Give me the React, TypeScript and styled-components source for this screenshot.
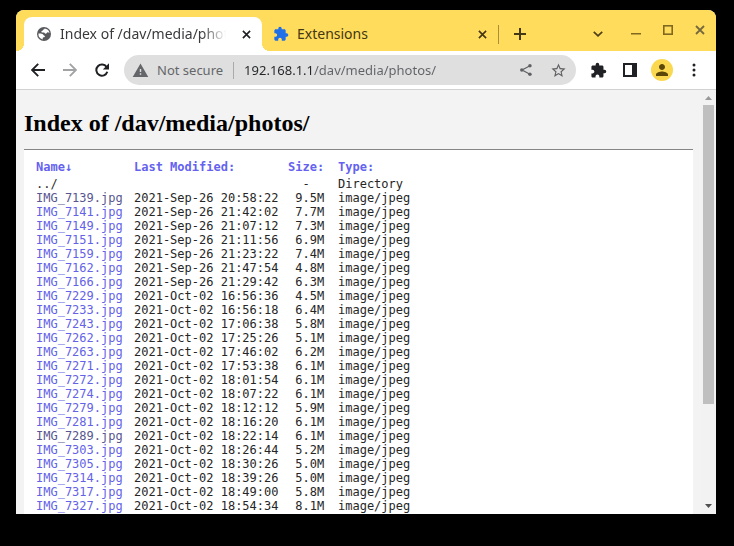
import React from "react";
import styled, { createGlobalStyle } from "styled-components";
import { MdExtension, MdPerson, MdStarBorder, MdWarning } from "react-icons/md";

const GlobalStyle = createGlobalStyle`
  * { box-sizing: border-box; }
  body { margin: 0; background: #000; }
  button, input { font: inherit; }
`;

const Desktop = styled.div`
  height: 100vh;
  padding: 10px 18px 32px 16px;
  background: #000;
  font-family: "Noto Sans", "Open Sans", sans-serif;
  font-size: 14px;
`;

const BrowserWindow = styled.div`
  display: flex;
  flex-direction: column;
  height: 100%;
  overflow: hidden;
  border-radius: 8px 8px 0 0;
  background: #f3f3f3;
`;

const TabStrip = styled.header`
  display: flex;
  flex: none;
  height: 41px;
  padding: 7px 0 0 8px;
  background: #ffdc5c;
`;

const Tab = styled.div<{ $active?: boolean }>`
  position: relative;
  display: flex;
  flex: 0 1 ${(p) => (p.$active ? 238 : 236)}px;
  min-width: 0;
  align-items: center;
  gap: 8px;
  padding: 0 8px 0 ${(p) => (p.$active ? 12 : 11)}px;
  border-radius: 8px 8px 0 0;
  color: ${(p) => (p.$active ? "#3a3a3d" : "#443714")};
  background: ${(p) => (p.$active ? "#fff" : "transparent")};

  &::before,
  &::after {
    content: "";
    display: ${(p) => (p.$active ? "block" : "none")};
    position: absolute;
    bottom: 0;
    width: 8px;
    height: 8px;
  }
  &::before {
    right: 100%;
    background: radial-gradient(circle at 0 0, transparent 8px, #fff 8px);
  }
  &::after {
    left: 100%;
    background: radial-gradient(circle at 100% 0, transparent 8px, #fff 8px);
  }
`;

const TabIcon = styled.span<{ $color: string }>`
  display: flex;
  flex: none;
  width: 16px;
  justify-content: center;
  font-size: 16px;
  color: ${(p) => p.$color};
`;

const TabTitle = styled.span<{ $fade?: boolean }>`
  flex: 1;
  min-width: 0;
  overflow: hidden;
  white-space: nowrap;
  line-height: 20px;
  mask-image: ${(p) =>
    p.$fade ? "linear-gradient(270deg, transparent 4px, #000 28px)" : "none"};
`;

const IconButton = styled.button<{ $size?: number; $width?: number; $tint?: string }>`
  display: flex;
  flex: none;
  align-items: center;
  justify-content: center;
  width: ${(p) => p.$width ?? 32}px;
  height: 28px;
  padding: 0;
  border: 0;
  background: none;
  color: ${(p) => p.$tint ?? "#202124"};
  font-size: ${(p) => p.$size ?? 17}px;
`;

const TabDivider = styled.span`
  flex: none;
  align-self: center;
  width: 1px;
  height: 19px;
  background: #a88f3c;
`;

const StripButtons = styled.div`
  display: flex;
  flex: 1;
  align-items: center;
  justify-content: space-between;
  padding-left: 5px;
`;

const WindowButtons = styled.div`
  display: flex;
  align-items: center;
`;

const FrameButton = styled(IconButton)`
  height: 34px;
  padding-bottom: 8px;
`;

const Toolbar = styled.nav`
  display: flex;
  flex: none;
  align-items: center;
  height: 39px;
  padding: 0 6px;
  border-bottom: 1px solid #d2d2d2;
  background: #fff;
`;

const Omnibox = styled.div`
  display: flex;
  flex: 1;
  min-width: 0;
  align-items: center;
  height: 30px;
  margin: 0 6px;
  padding: 0 2px 0 8px;
  border-radius: 15px;
  background: #dfdfdf;
`;

const Security = styled.button`
  display: flex;
  flex: none;
  align-items: center;
  gap: 8px;
  padding: 0 10px 0 0;
  border: 0;
  border-right: 1px solid #aaa;
  background: none;
  color: #646669;
  font-size: 13px;
  line-height: 16px;

  svg {
    font-size: 17px;
  }
`;

const Address = styled.input`
  flex: 1;
  min-width: 0;
  height: 24px;
  padding: 0 0 0 10px;
  border: 0;
  outline: 0;
  color: #5f6165;
  background: linear-gradient(90deg, #242528 80px, #5f6165 80px);
  background-clip: text;
  -webkit-background-clip: text;
  -webkit-text-fill-color: transparent;
  font-size: 13px;
`;

const Avatar = styled.span`
  display: flex;
  align-items: center;
  justify-content: center;
  width: 22px;
  height: 22px;
  border-radius: 50%;
  background: #fad84f;
  color: #5b4708;
  font-size: 18px;
`;

const Viewport = styled.div`
  display: flex;
  flex: 1;
  min-height: 0;
`;

const Page = styled.main`
  flex: 1;
  min-width: 0;
  overflow: hidden;
  padding: 0 8px;
`;

const Heading = styled.h1`
  margin: 0;
  padding: 19px 0 12px;
  color: #000;
  font: bold 24px/28px "Liberation Serif", serif;
`;

const Listing = styled.section`
  min-height: 100%;
  padding: 10px 12px;
  border-top: 1px solid #858585;
  background: #fff;
`;

const FileTable = styled.table`
  table-layout: fixed;
  width: 448px;
  border-collapse: collapse;
  color: #262626;
  font: 12px/14px "DejaVu Sans Mono", monospace;
  white-space: pre;
`;

const HeadCell = styled.th<{ $width?: number }>`
  width: ${(p) => (p.$width ? `${p.$width}px` : "auto")};
  padding: 0 0 3px;
  color: #6462ef;
  text-align: left;
`;

const Cell = styled.td`
  padding: 0;
`;

const FileLink = styled.a<{ $tone?: "visited" | "parent" }>`
  color: ${(p) =>
    p.$tone === "visited" ? "#59558f" : p.$tone === "parent" ? "#303030" : "#6462e8"};
  text-decoration: none;
`;

const Scrollbar = styled.div`
  display: flex;
  flex: none;
  flex-direction: column;
  align-items: center;
  width: 15px;
  background: #f2f2f3;
`;

const Arrow = styled.svg`
  flex: none;
  width: 15px;
  height: 15px;
`;

const Track = styled.div`
  flex: 1;
  width: 11px;
`;

const Thumb = styled.div`
  height: 76%;
  background: #bfbfbf;
`;

const files: [string, string, string][] = [
  ["7139", "Sep-26 20:58:22", "9.5M"],
  ["7141", "Sep-26 21:42:02", "7.7M"],
  ["7149", "Sep-26 21:07:12", "7.3M"],
  ["7151", "Sep-26 21:11:56", "6.9M"],
  ["7159", "Sep-26 21:23:22", "7.4M"],
  ["7162", "Sep-26 21:47:54", "4.8M"],
  ["7166", "Sep-26 21:29:42", "6.3M"],
  ["7229", "Oct-02 16:56:36", "4.5M"],
  ["7233", "Oct-02 16:56:18", "6.4M"],
  ["7243", "Oct-02 17:06:38", "5.8M"],
  ["7262", "Oct-02 17:25:26", "5.1M"],
  ["7263", "Oct-02 17:46:02", "6.2M"],
  ["7271", "Oct-02 17:53:38", "6.1M"],
  ["7272", "Oct-02 18:01:54", "6.1M"],
  ["7274", "Oct-02 18:07:22", "6.1M"],
  ["7279", "Oct-02 18:12:12", "5.9M"],
  ["7281", "Oct-02 18:16:20", "6.1M"],
  ["7289", "Oct-02 18:22:14", "6.1M"],
  ["7303", "Oct-02 18:26:44", "5.2M"],
  ["7305", "Oct-02 18:30:26", "5.0M"],
  ["7314", "Oct-02 18:39:26", "5.0M"],
  ["7317", "Oct-02 18:49:00", "5.8M"],
  ["7327", "Oct-02 18:54:34", "8.1M"],
];
const visited = new Set(["7139", "7289"]);

function GlobeIcon() {
  return (
    <svg width="14" height="14" viewBox="0 0 14 14">
      <circle cx="7" cy="7" r="7" fill="currentColor" />
      <path
        d="M7.6 1.5c-.3 1.2-1.5.8-1.8 1.7-.3.8-1.5.6-1.5 1.5 0 .9 1.700.6 2.600.7 1.100.1.7 1.300 1.700 1.300 1.200 0 1.100-1.500 2.100-1.500.7 0 1.100.6 1.800.5A5.600 5.600 0 0 0 7.600 1.500zM1.400 6.600a5.600 5.600 0 0 0 4.300 5.800c.1-.9-.2-1.300.4-1.800.6-.5 1.700-.2 1.800-1.100.1-.9-.9-.8-1.400-1.500-.7-1-1.900-1.400-5.100-1.400z"
        fill="#fff"
      />
    </svg>
  );
}

function ArrowIcon({ forward }: { forward?: boolean }) {
  return (
    <svg width="14" height="14" viewBox="0 0 14 14" fill="none" stroke="currentColor" strokeWidth="1.9">
      <path d={forward ? "M0 7h12.500M6.800.8 13 7l-6.200 6.200" : "M14 7H1.500M7.200.8 1 7l6.200 6.200"} />
    </svg>
  );
}

function ReloadIcon() {
  return (
    <svg width="14" height="14" viewBox="0 0 14 14">
      <path d="M11.600 4A5.600 5.600 0 1 0 12.300 8.800" fill="none" stroke="currentColor" strokeWidth="2" />
      <path d="M14 .2v6.200H7.800z" fill="currentColor" />
    </svg>
  );
}

function PlusIcon() {
  return (
    <svg width="12" height="12" viewBox="0 0 12 12" fill="none" stroke="currentColor" strokeWidth="2">
      <path d="M6 0v12M0 6h12" />
    </svg>
  );
}

function CrossIcon({ size = 10 }: { size?: number }) {
  return (
    <svg width={size} height={size} viewBox="0 0 10 10" fill="none" stroke="currentColor" strokeWidth="1.8">
      <path d="m1 1 8 8M9 1 1 9" />
    </svg>
  );
}

function ChevronIcon() {
  return (
    <svg width="10" height="6" viewBox="0 0 10 6" fill="none" stroke="currentColor" strokeWidth="1.8">
      <path d="m.8.8 4.200 4L9.200.8" />
    </svg>
  );
}

function ShareIcon() {
  return (
    <svg width="14" height="14" viewBox="0 0 16 16" fill="none" stroke="currentColor" strokeWidth="1.4">
      <path d="M12 3.500 3.500 8l8.500 4.500" />
      <g fill="currentColor" stroke="none">
        <circle cx="12.500" cy="3.200" r="2" />
        <circle cx="3.200" cy="8" r="2" />
        <circle cx="12.500" cy="12.800" r="2" />
      </g>
    </svg>
  );
}

function SidePanelIcon() {
  return (
    <svg width="14" height="14" viewBox="0 0 14 14">
      <path d="M0 0h14v14H0zM2 2v10h7V2z" fill="currentColor" fillRule="evenodd" />
    </svg>
  );
}

function DotsIcon() {
  return (
    <svg width="4" height="14" viewBox="0 0 4 14" fill="currentColor">
      <circle cx="2" cy="2" r="1.500" />
      <circle cx="2" cy="7" r="1.500" />
      <circle cx="2" cy="12" r="1.500" />
    </svg>
  );
}

function MinimizeIcon() {
  return (
    <svg width="10" height="10" viewBox="0 0 10 10" fill="none" stroke="currentColor" strokeWidth="1.500">
      <path d="M0 8.800h10" />
    </svg>
  );
}

function MaximizeIcon() {
  return (
    <svg width="10" height="10" viewBox="0 0 10 10" fill="none" stroke="currentColor" strokeWidth="1.600">
      <rect x="0.8" y="0.8" width="8.400" height="8.400" />
    </svg>
  );
}

export default function App() {
  return (
    <Desktop>
      <GlobalStyle />
      <BrowserWindow>
        <TabStrip>
          <Tab $active>
            <TabIcon $color="#58595c"><GlobeIcon /></TabIcon>
            <TabTitle $fade>Index of /dav/media/photos/</TabTitle>
            <IconButton $width={16} aria-label="Close tab"><CrossIcon size={9} /></IconButton>
          </Tab>
          <Tab>
            <TabIcon $color="#1f6fe8"><MdExtension /></TabIcon>
            <TabTitle>Extensions</TabTitle>
            <IconButton $width={16} $tint="#443714" aria-label="Close Extensions tab"><CrossIcon size={9} /></IconButton>
          </Tab>
          <TabDivider />
          <StripButtons>
            <IconButton $tint="#443714" aria-label="New tab"><PlusIcon /></IconButton>
            <WindowButtons>
              <IconButton $width={44} $tint="#51411a" aria-label="Search tabs"><ChevronIcon /></IconButton>
              <FrameButton $tint="#806820" aria-label="Minimize"><MinimizeIcon /></FrameButton>
              <FrameButton $tint="#806820" aria-label="Maximize"><MaximizeIcon /></FrameButton>
              <FrameButton $tint="#75683f" aria-label="Close window"><CrossIcon /></FrameButton>
            </WindowButtons>
          </StripButtons>
        </TabStrip>
        <Toolbar>
          <IconButton aria-label="Back"><ArrowIcon /></IconButton>
          <IconButton $tint="#a2a3a5" aria-label="Forward"><ArrowIcon forward /></IconButton>
          <IconButton aria-label="Reload"><ReloadIcon /></IconButton>
          <Omnibox>
            <Security><MdWarning />Not secure</Security>
            <Address aria-label="Address" defaultValue="192.168.1.1/dav/media/photos/" />
            <IconButton $tint="#606164" aria-label="Share"><ShareIcon /></IconButton>
            <IconButton $tint="#606164" aria-label="Bookmark"><MdStarBorder /></IconButton>
          </Omnibox>
          <IconButton aria-label="Extensions"><MdExtension /></IconButton>
          <IconButton aria-label="Side panel"><SidePanelIcon /></IconButton>
          <IconButton aria-label="Profile"><Avatar><MdPerson /></Avatar></IconButton>
          <IconButton aria-label="Menu"><DotsIcon /></IconButton>
        </Toolbar>
        <Viewport>
          <Page>
            <Heading>Index of /dav/media/photos/</Heading>
            <Listing>
              <FileTable>
                <thead>
                  <tr>
                    <HeadCell $width={98}>Name↓</HeadCell>
                    <HeadCell $width={154}>Last Modified:</HeadCell>
                    <HeadCell $width={50}>Size:</HeadCell>
                    <HeadCell>Type:</HeadCell>
                  </tr>
                </thead>
                <tbody>
                  <tr>
                    <Cell><FileLink href="#" $tone="parent">../</FileLink></Cell>
                    <Cell />
                    <Cell>{"  -"}</Cell>
                    <Cell>Directory</Cell>
                  </tr>
                  {files.map(([id, date, size]) => (
                    <tr key={id}>
                      <Cell>
                        <FileLink href={`#${id}`} $tone={visited.has(id) ? "visited" : undefined}>
                          {`IMG_${id}.jpg`}
                        </FileLink>
                      </Cell>
                      <Cell>{`2021-${date}`}</Cell>
                      <Cell>{` ${size}`}</Cell>
                      <Cell>image/jpeg</Cell>
                    </tr>
                  ))}
                </tbody>
              </FileTable>
            </Listing>
          </Page>
          <Scrollbar aria-hidden="true">
            <Arrow viewBox="0 0 15 15"><path d="M4 10h7L7.500 6z" fill="#999" /></Arrow>
            <Track><Thumb /></Track>
            <Arrow viewBox="0 0 15 15"><path d="M4 5h7L7.500 9z" fill="#505050" /></Arrow>
          </Scrollbar>
        </Viewport>
      </BrowserWindow>
    </Desktop>
  );
}
